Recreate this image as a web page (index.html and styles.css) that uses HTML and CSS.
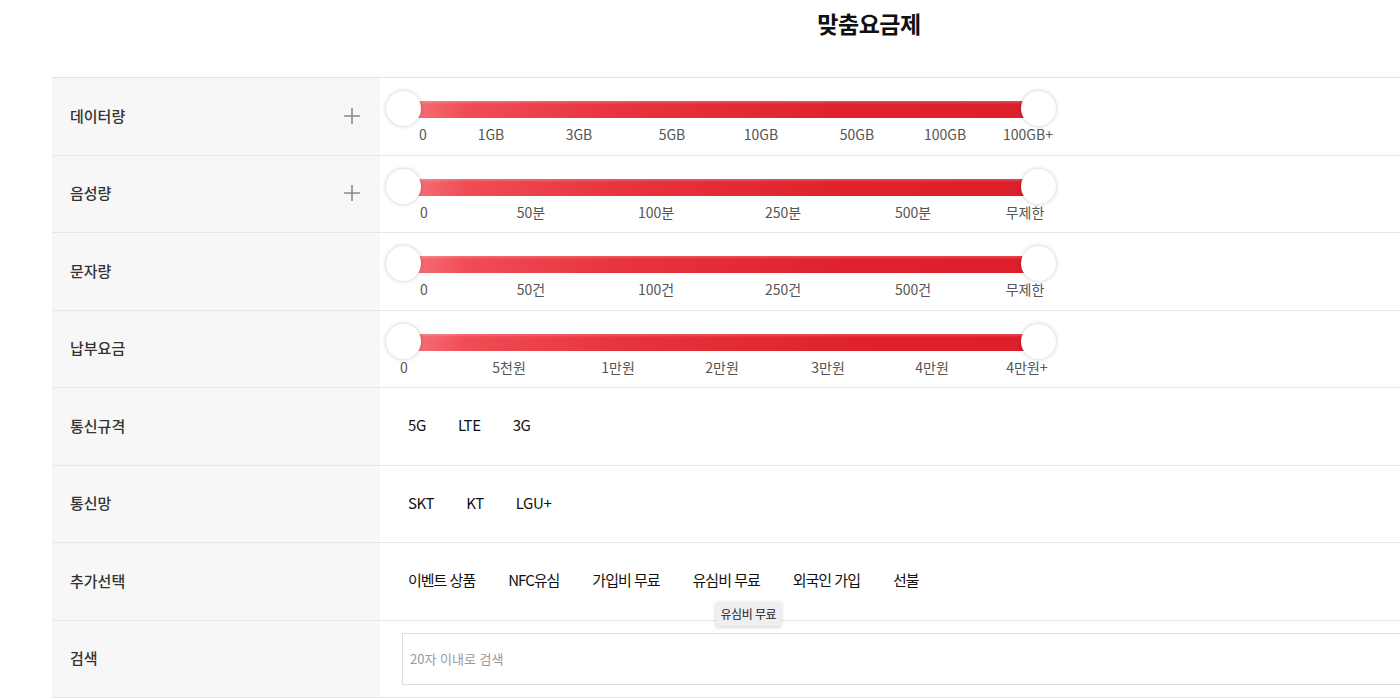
FILE: index.html
```html
<!DOCTYPE html>
<html lang="ko">
<head>
<meta charset="utf-8">
<title>맞춤요금제</title>
<link rel="stylesheet" href="styles.css">
</head>
<body>
<div class="wrap">
  <h1 class="title">맞춤요금제</h1>
  <div class="table">
    <div class="row">
      <div class="th">데이터량<svg class="plus" viewBox="0 0 18 18" width="18" height="18"><path d="M9 1v16M1 9h16" stroke="#8a8a8a" stroke-width="1.6" fill="none"/></svg></div>
      <div class="td slider-cell">
        <div class="slider"><div class="track"></div><span class="knob knob-l"></span><span class="knob knob-r"></span></div>
        <div class="ticks">
          <span style="left:43px">0</span><span style="left:111px">1GB</span><span style="left:199px">3GB</span><span style="left:292px">5GB</span><span style="left:381px">10GB</span><span style="left:477px">50GB</span><span style="left:565px">100GB</span><span style="left:648px">100GB+</span>
        </div>
      </div>
    </div>
    <div class="row">
      <div class="th">음성량<svg class="plus" viewBox="0 0 18 18" width="18" height="18"><path d="M9 1v16M1 9h16" stroke="#8a8a8a" stroke-width="1.6" fill="none"/></svg></div>
      <div class="td slider-cell">
        <div class="slider"><div class="track"></div><span class="knob knob-l"></span><span class="knob knob-r"></span></div>
        <div class="ticks">
          <span style="left:44px">0</span><span style="left:151px">50분</span><span style="left:276px">100분</span><span style="left:403px">250분</span><span style="left:533px">500분</span><span style="left:645px">무제한</span>
        </div>
      </div>
    </div>
    <div class="row">
      <div class="th">문자량</div>
      <div class="td slider-cell">
        <div class="slider"><div class="track"></div><span class="knob knob-l"></span><span class="knob knob-r"></span></div>
        <div class="ticks">
          <span style="left:44px">0</span><span style="left:151px">50건</span><span style="left:276px">100건</span><span style="left:403px">250건</span><span style="left:533px">500건</span><span style="left:645px">무제한</span>
        </div>
      </div>
    </div>
    <div class="row">
      <div class="th">납부요금</div>
      <div class="td slider-cell">
        <div class="slider"><div class="track"></div><span class="knob knob-l"></span><span class="knob knob-r"></span></div>
        <div class="ticks">
          <span style="left:24px">0</span><span style="left:129px">5천원</span><span style="left:238px">1만원</span><span style="left:342px">2만원</span><span style="left:448px">3만원</span><span style="left:552px">4만원</span><span style="left:647px">4만원+</span>
        </div>
      </div>
    </div>
    <div class="row">
      <div class="th">통신규격</div>
      <div class="td options options-en">
        <span class="opt">5G</span><span class="opt">LTE</span><span class="opt">3G</span>
      </div>
    </div>
    <div class="row">
      <div class="th">통신망</div>
      <div class="td options options-en">
        <span class="opt">SKT</span><span class="opt">KT</span><span class="opt">LGU+</span>
      </div>
    </div>
    <div class="row">
      <div class="th">추가선택</div>
      <div class="td options options-ko">
        <span class="opt">이벤트 상품</span><span class="opt">NFC유심</span><span class="opt">가입비 무료</span><span class="opt">유심비 무료<span class="tip">유심비 무료</span></span><span class="opt">외국인 가입</span><span class="opt">선불</span>
      </div>
    </div>
    <div class="row">
      <div class="th">검색</div>
      <div class="td search-cell">
        <input class="search" type="text" placeholder="20자 이내로 검색">
      </div>
    </div>
  </div>
</div>
</body>
</html>
```

FILE: styles.css
```css
* { box-sizing: border-box; }
html, body { margin: 0; padding: 0; background: #fff; overflow: hidden; }
body {
  font-family: "Noto Sans CJK KR", "Noto Sans", sans-serif;
  color: #111;
}
.wrap {
  margin-left: 52px;
  width: 1634px;
}
.title {
  margin: 0;
  height: 77px;
  padding-top: 6px;
  line-height: 34px;
  font-size: 23px;
  font-weight: 700;
  text-align: center;
  color: #111;
  letter-spacing: -0.5px;
}
.table {
  border-top: 1px solid #e3e3e3;
  box-shadow: inset 0 1px 0 #f3f3f3;
}
.row {
  display: flex;
  height: 77.5px;
  border-bottom: 1px solid #e6e6e6;
  box-shadow: 0 1px 0 #f4f4f4;
}
.th {
  width: 328px;
  flex: none;
  background: #f7f7f7;
  display: flex;
  align-items: center;
  justify-content: space-between;
  padding: 0 18px 2px 18px;
  font-size: 15px;
  font-weight: 500;
  color: #333;
}
.plus { display: block; margin-right: 1px; margin-top: 1px; }
.td { flex: 1; background: #fff; }

.slider-cell { padding-top: 13px; padding-left: 6px; }
.slider {
  position: relative;
  width: 670px;
  height: 35px;
}
.track {
  position: absolute;
  left: 17px;
  right: 17px;
  top: 10px;
  height: 17px;
  background: linear-gradient(to right, #f7777d 0%, #f04c55 10%, #e7333d 35%, #df222d 70%, #dc1f2a 100%);
  box-shadow: inset 0 2px 2px rgba(255,255,255,0.18);
}
.knob {
  position: absolute;
  top: 0;
  width: 35px;
  height: 35px;
  border-radius: 50%;
  background: #fff;
  box-shadow: 0 0 4px rgba(0,0,0,0.22);
}
.knob-l { left: 0; }
.knob-r { right: 0; }
.ticks {
  position: relative;
  height: 18px;
  margin-left: -6px;
  margin-top: -1px;
}
.ticks span {
  position: absolute;
  top: 0;
  transform: translateX(-50%);
  font-size: 14px;
  line-height: 18px;
  color: #555;
  white-space: nowrap;
}

.options {
  display: flex;
  align-items: center;
  gap: 33px;
  padding-left: 28px;
  padding-bottom: 3px;
  font-size: 15px;
  color: #111;
}
.options-en { letter-spacing: -0.4px; gap: 32px; }
.options-ko { letter-spacing: -1px; }
.opt { position: relative; white-space: nowrap; }
.tip {
  position: absolute;
  left: 23px;
  top: 33px;
  padding: 0 5px;
  height: 24px;
  line-height: 24px;
  font-size: 12px;
  letter-spacing: -0.5px;
  color: #222;
  background: #efefef;
  border-radius: 2px;
  box-shadow: 0 1px 4px rgba(0,0,0,0.2);
  z-index: 2;
}
.search-cell { padding: 12px 0 0 22px; }
.search {
  display: block;
  width: 1200px;
  height: 52px;
  border: 1px solid #dcdcdc;
  padding: 0 7px;
  font-family: "Noto Sans CJK KR", "Noto Sans", sans-serif;
  font-size: 13px;
  color: #333;
  outline: none;
}
.search::placeholder { color: #9a9a9a; }
```
